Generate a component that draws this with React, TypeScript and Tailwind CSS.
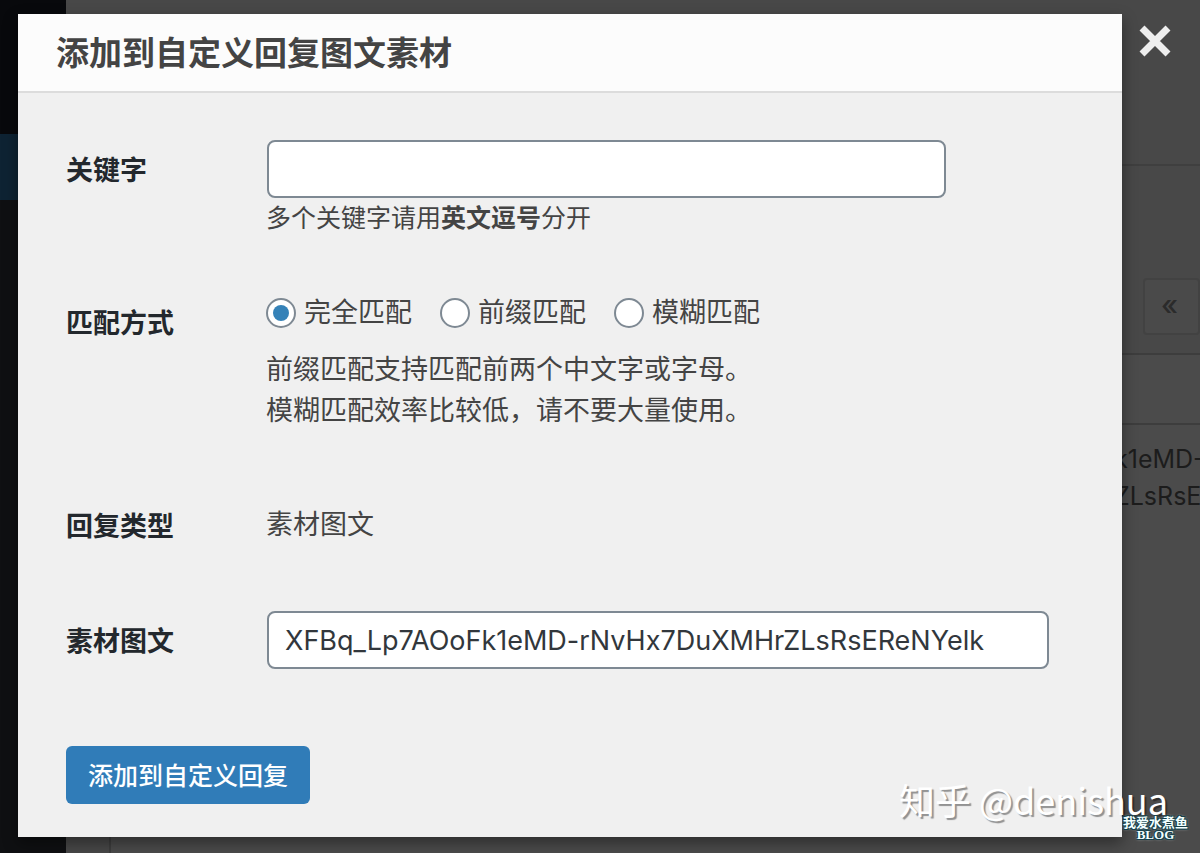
import { useState } from "react";

const MATCH_MODES = [
  { value: "full", label: "完全匹配" },
  { value: "prefix", label: "前缀匹配" },
  { value: "fuzzy", label: "模糊匹配" },
];

// 遮罩下面的后台页面
function AdminPage() {
  return (
    <div className="flex min-h-screen overflow-hidden" aria-hidden="true">
      <div className="w-[66px] shrink-0 bg-[#0f1012]">
        <div className="h-[134px] bg-[#08090c]" />
        <div className="h-[66px] bg-[#0e2333]" />
      </div>
      <div className="flex min-w-0 flex-1 flex-col bg-[#484848] pl-[43px]">
        <div className="h-[166px] border-b-2 border-[#3f3f3f]" />
        <div className="flex h-[187px] items-end justify-end pb-[18px]">
          <div className="flex h-[57px] w-[57px] items-center justify-center rounded border-2 border-[#424242] bg-[#4a4a4a] pb-1 pr-1 text-[28px] font-medium text-[#2b2b2b]">
            «
          </div>
        </div>
        <div className="flex-1 border-l-2 border-t-2 border-[#3d3d3d] bg-[#4b4b4b]">
          <div className="h-[70px] border-b-2 border-[#3d3d3d]" />
          <div className="flex justify-end pt-4 text-[25px] leading-[37px] text-[#1c1c1c]">
            <div className="w-[86px] whitespace-nowrap">
              k1eMD-
              <br />
              ZLsRsE
            </div>
          </div>
        </div>
      </div>
    </div>
  );
}

export default function App() {
  const [keyword, setKeyword] = useState("");
  const [mode, setMode] = useState("full");
  const [media, setMedia] = useState("XFBq_Lp7AOoFk1eMD-rNvHx7DuXMHrZLsRsEReNYelk");

  return (
    <div className="relative min-h-screen overflow-hidden bg-[#484848] font-['Inter','Noto_Sans_CJK_SC',sans-serif] text-[27px] leading-9 text-[#444444]">
      <AdminPage />

      {/* 弹窗 */}
      <div className="absolute inset-0 flex pb-4 pl-[18px] pt-[14px]">
        <div className="flex-1 bg-[#f0f0f0] shadow-[0_6px_14px_rgba(0,0,0,0.4)]">
          <header className="border-b-2 border-[#dcdcdc] bg-[#fcfcfc] px-[38px] pt-0.5">
            <h1 className="text-[33px] font-bold leading-[75px]">添加到自定义回复图文素材</h1>
          </header>

          <form className="px-12 pt-[47px]" onSubmit={(e) => e.preventDefault()}>
            <div className="grid grid-cols-[200px_1fr]">
              <label htmlFor="keyword" className="pt-[13px] font-bold text-[#23282d]">
                关键字
              </label>
              <div>
                <input
                  id="keyword"
                  type="text"
                  value={keyword}
                  onChange={(e) => setKeyword(e.target.value)}
                  className="mx-px block h-[58px] w-[679px] max-w-full rounded-lg border-2 border-[#7e8993] bg-white px-4"
                />
                <p className="text-[25px] leading-[41px]">
                  多个关键字请用<strong>英文逗号</strong>分开
                </p>
              </div>
            </div>

            <div className="mt-[54px] grid grid-cols-[200px_1fr]" role="radiogroup" aria-labelledby="mode-label">
              <div id="mode-label" className="pt-[13px] font-bold text-[#23282d]">
                匹配方式
              </div>
              <div>
                <div className="flex h-10 items-center gap-7">
                  {MATCH_MODES.map((m) => (
                    <label key={m.value} className="flex items-center gap-2">
                      <input
                        type="radio"
                        name="mode"
                        value={m.value}
                        checked={mode === m.value}
                        onChange={() => setMode(m.value)}
                        className="grid size-[30px] appearance-none place-items-center rounded-full border-2 border-[#7e8993] bg-white before:size-4 before:rounded-full checked:before:bg-[#3582b8]"
                      />
                      {m.label}
                    </label>
                  ))}
                </div>
                <p className="mt-4 leading-[41px]">
                  前缀匹配支持匹配前两个中文字或字母。
                  <br />
                  模糊匹配效率比较低，请不要大量使用。
                </p>
              </div>
            </div>

            <div className="mt-[65px] grid grid-cols-[200px_1fr]">
              <div className="pt-[13px] font-bold text-[#23282d]">回复类型</div>
              <div className="pt-[11px]">素材图文</div>
            </div>

            <div className="mt-[66px] grid grid-cols-[200px_1fr]">
              <label htmlFor="media" className="pt-[13px] font-bold text-[#23282d]">
                素材图文
              </label>
              <input
                id="media"
                type="text"
                value={media}
                onChange={(e) => setMedia(e.target.value)}
                className="mx-px block h-[58px] w-[782px] max-w-full rounded-lg border-2 border-[#7e8993] bg-white px-4 text-[#32373c]"
              />
            </div>

            <button
              type="submit"
              className="mt-[77px] block h-[58px] rounded-md bg-[#307cb8] px-[22px] pt-0.5 text-[25px] font-medium text-white"
            >
              添加到自定义回复
            </button>
          </form>
        </div>

        <div className="w-[78px] shrink-0 pl-[17px] pt-[11px]">
          <button type="button" aria-label="关闭" className="block">
            <svg viewBox="0 0 32 32" className="size-8" fill="none" stroke="#eeeeee" strokeWidth="7" strokeLinejoin="round">
              <path d="M3 3 29 29M29 3 3 29" />
            </svg>
          </button>
        </div>
      </div>

      {/* 水印 */}
      <div className="pointer-events-none absolute bottom-7 right-8 whitespace-nowrap font-['Noto_Sans_CJK_SC',sans-serif] text-4xl leading-[52px] text-white [text-shadow:2px_2px_1px_rgba(0,0,0,0.4)]">
        知乎 @denishua
      </div>
      <div className="pointer-events-none absolute bottom-3 right-3 text-center font-['Liberation_Serif','Noto_Sans_CJK_SC',serif] text-[13px] font-bold leading-3 text-[#f2ffff] [text-shadow:1px_1px_0_#16404a,-1px_-1px_0_#16404a,1px_-1px_0_#16404a,-1px_1px_0_#16404a,0_0_3px_#d8f4f6]">
        我爱水煮鱼
        <br />
        BLOG
      </div>
    </div>
  );
}
